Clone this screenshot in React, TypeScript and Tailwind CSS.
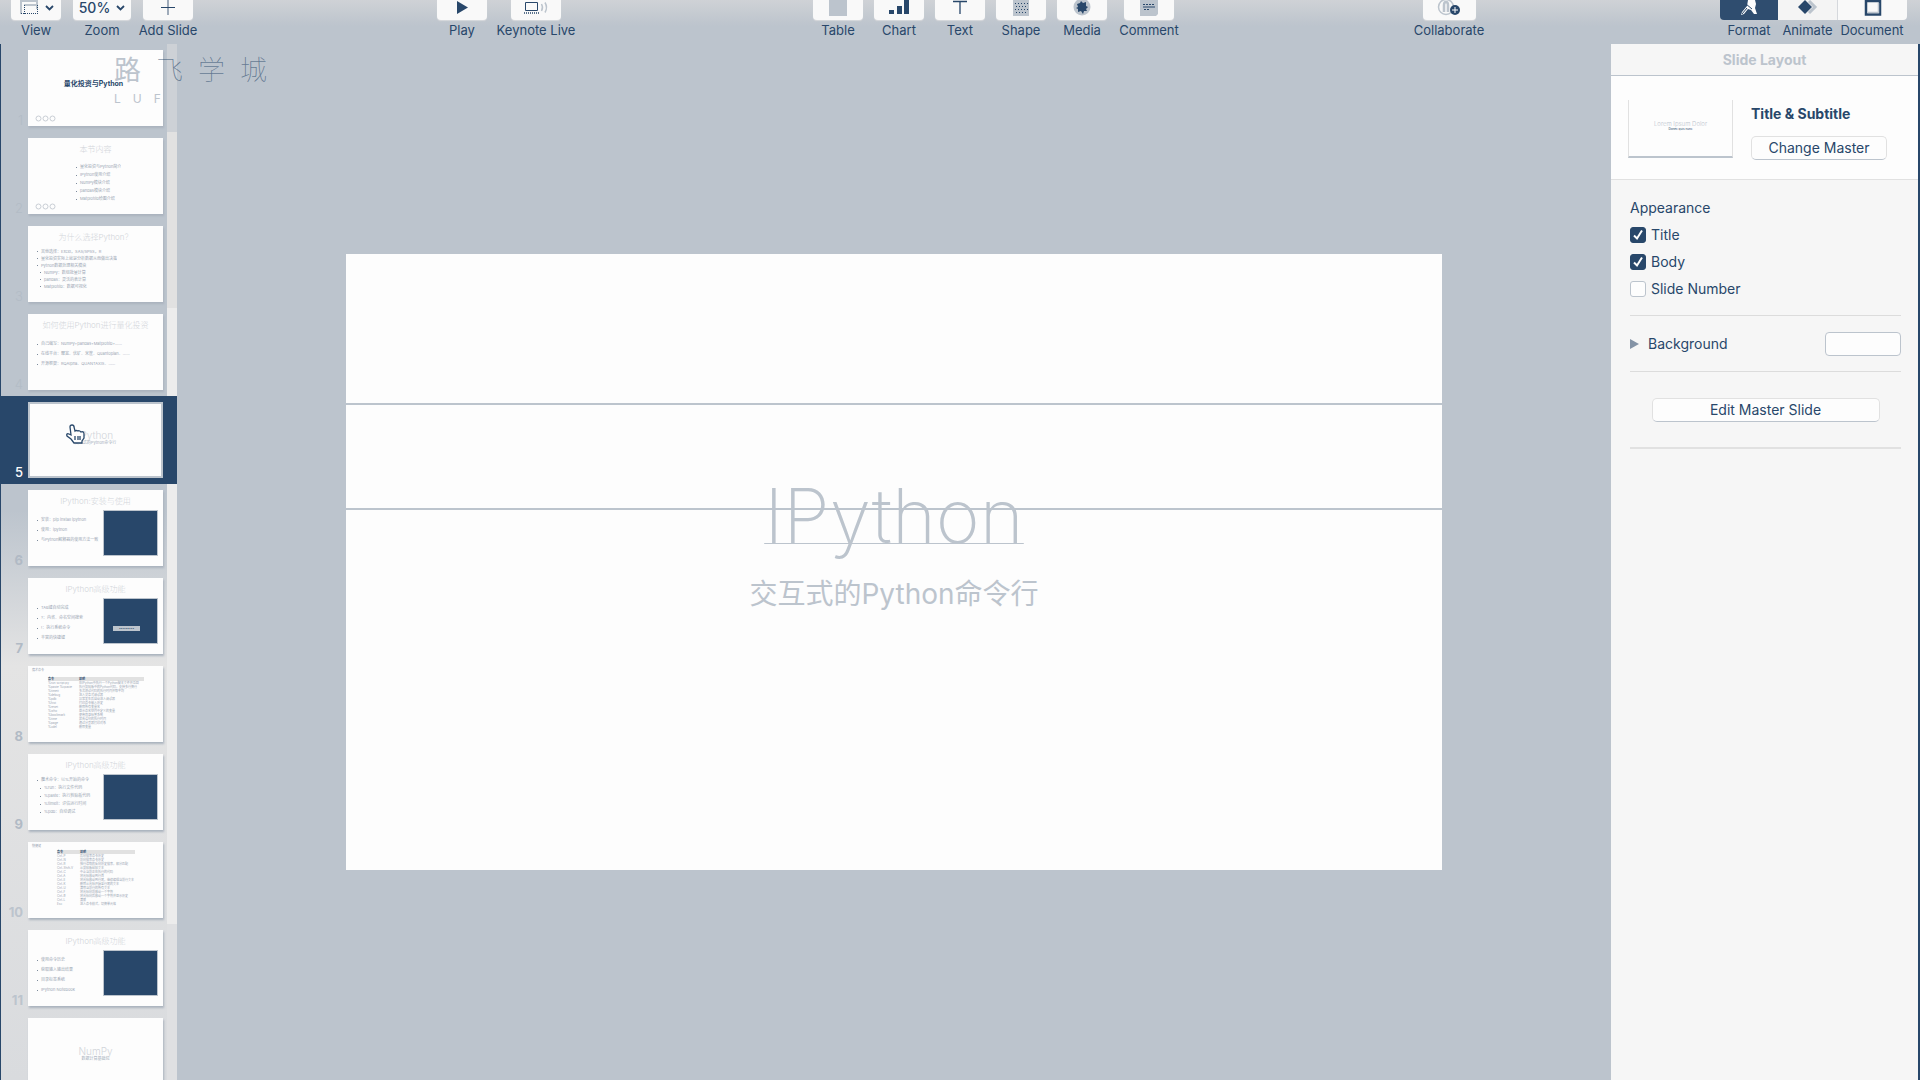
import React from "react";
import type { ReactNode } from "react";

const N = "#28476a";
const G = "#bcc4cd";

const Caret = () => (
  <svg width="9" height="6" viewBox="0 0 9 6" fill="none" stroke={N} strokeWidth="1.8">
    <path d="M1 1l3.5 3.5L8 1" />
  </svg>
);

function ToolButton({ label, width, children }: { label: string; width: string; children: ReactNode }) {
  return (
    <button className="flex w-0 flex-col items-center justify-start">
      <span className={`flex h-5 items-start justify-center gap-1.5 overflow-hidden rounded-b-[4px] bg-[#f9f9f9] shadow-[0_1px_1px_#d8dadd] ${width}`}>
        {children}
      </span>
      <span className="h-5 text-[13px] leading-5 whitespace-nowrap">{label}</span>
    </button>
  );
}

function Toolbar() {
  return (
    <header className="flex h-11 shrink-0 items-start bg-linear-to-b from-[#cfd2d6] via-[#bfc6ce] via-50% to-[#bcc4cd] to-60%">
      <div className="flex flex-1 items-start">
        <div className="flex gap-[66px] pl-9">
          <ToolButton label="View" width="w-[50px]">
            <svg width="20" height="15" viewBox="0 0 20 15" fill="none">
              <path d="M2 0v14M18 0v9M2 1h16M5 5h13" stroke={G} strokeWidth="2" />
              <path d="M5.5 5v9M2 13.500h17M18.500 5v9" stroke={N} strokeDasharray="1 1" />
            </svg>
            <span className="flex h-[15px] items-center"><Caret /></span>
          </ToolButton>
          <ToolButton label="Zoom" width="w-[58px]">
            <span className="text-sm leading-[15px] font-medium">50%</span>
            <span className="flex h-[15px] items-center"><Caret /></span>
          </ToolButton>
          <ToolButton label="Add Slide" width="w-[50px]">
            <svg width="14" height="15" viewBox="0 0 14 15">
              <path d="M7 0v15" stroke="#8191a5" strokeWidth="1.500" />
              <path d="M0 7.500h14" stroke={N} />
            </svg>
          </ToolButton>
        </div>
        <div className="ml-[294px] flex gap-[74px]">
          <ToolButton label="Play" width="w-[50px]">
            <svg width="12" height="15" viewBox="0 0 12 15" fill={N}>
              <path d="M1 1l11 6.500L1 14z" />
            </svg>
          </ToolButton>
          <ToolButton label="Keynote Live" width="w-[50px]">
            <svg width="26" height="15" viewBox="0 0 26 15" fill="none">
              <path d="M2.500 2.500h12v8h-12z" stroke={N} />
              <path d="M1 13h16" stroke={N} strokeWidth="1.500" strokeDasharray="1 1" />
              <path d="M18.500 4q2 3.500 0 7M22 2.500q3 5 0 10" stroke={G} strokeWidth="1.500" />
            </svg>
          </ToolButton>
        </div>
      </div>
      <div className="flex gap-[61px] pr-[300px]">
        <ToolButton label="Table" width="w-[50px]">
          <svg width="18" height="16" viewBox="0 0 18 16"><path d="M0 0h18v16H0z" fill={G} /></svg>
        </ToolButton>
        <ToolButton label="Chart" width="w-[50px]">
          <svg width="20" height="15" viewBox="0 0 20 15" fill={N}><path d="M0 10h5v4H0zM8 6h5v8H8zM15 0h5v14h-5z" /></svg>
        </ToolButton>
        <ToolButton label="Text" width="w-[50px]">
          <svg width="14" height="15" viewBox="0 0 14 15" stroke={N} fill="none"><path d="M0 1.500h14M7 1.500V14" strokeWidth="1.300" /></svg>
        </ToolButton>
        <ToolButton label="Shape" width="w-[50px]">
          <svg width="16" height="16" viewBox="0 0 16 16">
            <path d="M0 0h16v16H0z" fill={G} />
            <path d="M2 3.500h13M3 6.500h12M2 9.500h13M3 12.500h12" stroke={N} strokeDasharray="1 2" />
          </svg>
        </ToolButton>
        <ToolButton label="Media" width="w-[50px]">
          <svg width="18" height="16" viewBox="0 0 18 16">
            <circle cx="9" cy="7" r="8.500" fill={G} />
            <path d="M4 4l3-1 1-2 2 2 3-1v4l2 1-2 2 1 2-3 0-1 3-2-3-3 1v-3l-2-1 2-1z" fill={N} />
          </svg>
        </ToolButton>
        <div className="ml-1.5">
          <ToolButton label="Comment" width="w-[50px]">
            <svg width="18" height="16" viewBox="0 0 18 16">
              <path d="M0 0h18v14l-2 2H0z" fill={G} />
              <path d="M3 4.500h12M4 9.500h6" stroke={N} strokeDasharray="2 1" />
              <path d="M3 7h12" stroke={N} />
            </svg>
          </ToolButton>
        </div>
      </div>
      <div className="pr-[271px]">
        <ToolButton label="Collaborate" width="w-[53px]">
          <svg width="24" height="16" viewBox="0 0 24 16" fill="none">
            <circle cx="9" cy="7" r="7.500" stroke={G} strokeWidth="1.500" />
            <path d="M7 12V5q0-3 2-3t2 3v7" stroke={G} strokeWidth="2.500" />
            <circle cx="18" cy="10" r="5" fill={N} />
            <path d="M18 7v6M15 10h6" stroke="#fdfdfd" />
          </svg>
        </ToolButton>
      </div>
      <div className="flex w-[200px] items-start justify-start">
        <button className="flex w-[58px] flex-col items-center">
          <span className="flex h-5 w-full items-start justify-center rounded-bl-[4px] bg-[#2f4d6f]">
            <svg width="20" height="16" viewBox="0 0 20 16" fill="#fdfdfd">
              <path d="M9 0h7l1 4-1 4 2 6h-3l-3-4-3-1-4 5-3 1 1-3 5-6z" />
              <path d="M7 4l6 5M3 14l5-6" stroke={N} />
            </svg>
          </span>
          <span className="h-5 text-[13px] leading-5">Format</span>
        </button>
        <button className="flex w-[59px] flex-col items-center">
          <span className="flex h-5 w-full items-start justify-center bg-[#f4f4f4]">
            <svg width="20" height="15" viewBox="0 0 20 15"><path d="M11 1l6 6-6 6" fill="none" stroke={G} strokeWidth="3" /><path d="M7 0l7 7-7 7-7-7z" fill={N} /></svg>
          </span>
          <span className="h-5 text-[13px] leading-5">Animate</span>
        </button>
        <button className="flex w-[70px] flex-col items-center">
          <span className="flex h-5 w-full items-start justify-center rounded-br-[4px] border-l border-[#d5d8dc] bg-[#f9f9f9]">
            <svg width="18" height="16" viewBox="0 0 18 16" fill="none"><path d="M2 0v14.500h14V0M2 1h14" stroke={N} strokeWidth="2.500" /><path d="M3.500 12.500h11V3" stroke={G} strokeWidth="1.500" /></svg>
          </span>
          <span className="h-5 text-[13px] leading-5">Document</span>
        </button>
      </div>
    </header>
  );
}

type Slide = {
  title?: string;
  sub?: string;
  kind: "cover" | "list" | "code" | "table" | "center";
  items?: string[];
  rows?: [string, string][];
  dots?: boolean;
};

const magic: [string, string][] = [
  ["命令", "说明"],
  ["%run script.py", "在IPython中执行一个Python脚本文件并返回"],
  ["%paste %cpaste", "执行剪贴板中的Python代码，支持多行换行"],
  ["%timeit", "多次测试代码的执行时间并取平均"],
  ["%debug", "进入交互式调试器"],
  ["%pdb", "异常发生后自动进入调试器"],
  ["%hist", "打印命令输入历史"],
  ["%reset", "删除所有变量名"],
  ["%who", "显示命名空间中定义的变量"],
  ["%bookmark", "使用目录标签系统"],
  ["%time", "报告语句的执行时间"],
  ["%page", "通过分页器打印对象"],
  ["%xdel", "删除变量"],
];
const keys: [string, string][] = [
  ["命令", "说明"],
  ["Ctrl-P", "后向搜索命令历史"],
  ["Ctrl-N", "前向搜索命令历史"],
  ["Ctrl-R", "按行读取的反向历史搜索，部分匹配"],
  ["Ctrl-Shift-V", "从剪贴板粘贴文本"],
  ["Ctrl-C", "中止当前正在执行的代码"],
  ["Ctrl-A", "将光标移动到行首"],
  ["Ctrl-E", "将光标移动到行尾，继续编辑当前行文本"],
  ["Ctrl-K", "删除从光标开始至行尾的文本"],
  ["Ctrl-U", "清除当前行的所有文本"],
  ["Ctrl-F", "将光标向前移动一个字符"],
  ["Ctrl-B", "将光标向后移动一个字符并显示历史"],
  ["Ctrl-L", "清屏"],
  ["Esc", "进入命令模式，切换单元格"],
];

const slides: Slide[] = [
  { kind: "cover", title: "量化投资与Python", dots: true },
  { kind: "list", title: "本节内容", dots: true, items: ["量化投资与Python简介", "IPython使用介绍", "NumPy模块介绍", "pandas模块介绍", "Matplotlib绘图介绍"] },
  { kind: "list", title: "为什么选择Python？", items: ["其他选择：Excel，SAS/SPSS，R", "量化投资实际上就是分析数据从而做出决策", "Python数据处理相关模块", "NumPy：数组批量计算", "pandas：灵活的表计算", "Matplotlib：数据可视化"] },
  { kind: "list", title: "如何使用Python进行量化投资", items: ["自己编写：NumPy+pandas+Matplotlib+……", "在线平台：聚宽、优矿、米筐、Quantopian、……", "开源框架：RQAlpha、QUANTAXIS、……"] },
  { kind: "center", title: "IPython", sub: "交互式的Python命令行" },
  { kind: "code", title: "IPython:安装与使用", items: ["安装：pip install ipython", "使用：ipython", "与Python解释器的使用方法一致"] },
  { kind: "code", title: "IPython高级功能", items: ["TAB键自动完成", "?：内省、命名空间搜索", "!：执行系统命令", "丰富的快捷键"] },
  { kind: "table", title: "魔术命令", rows: magic },
  { kind: "code", title: "IPython高级功能", items: ["魔术命令：以%开始的命令", "%run：执行文件代码", "%paste：执行剪贴板代码", "%timeit：评估运行时间", "%pdb：自动调试"] },
  { kind: "table", title: "快捷键", rows: keys },
  { kind: "code", title: "IPython高级功能", items: ["使用命令历史", "获取输入输出结果", "目录标签系统", "IPython Notebook"] },
  { kind: "center", title: "NumPy", sub: "数据计算基础包" },
];

function Rings() {
  return (
    <svg className="absolute bottom-1 left-[7px]" width="21" height="7" viewBox="0 0 21 7" fill="none" stroke="#c9ced5">
      <circle cx="3.500" cy="3.500" r="2.500" /><circle cx="10.500" cy="3.500" r="2.500" /><circle cx="17.500" cy="3.500" r="2.500" />
    </svg>
  );
}

function SlideBody({ slide, index }: { slide: Slide; index: number }) {
  const { kind, title, sub, items = [], rows = [] } = slide;
  if (kind === "cover")
    return <div className="pt-7 pr-1 text-center text-[7px] leading-3 font-bold whitespace-nowrap text-[#28476a]">{title}</div>;
  if (kind === "center")
    return (
      <div className="pt-7 text-center">
        <div className="text-[10px] leading-[10px] font-light text-[#d2d5da]">{title}</div>
        <div className="text-[4px] leading-[6px] text-[#a3adba]">{sub}</div>
      </div>
    );
  if (kind === "table") {
    const wide = index === 7;
    return (
      <div className="pt-[2px]">
        <div className="pl-1 text-[3px] leading-[4px]">{title}</div>
        <table className={wide ? "mt-[5px] ml-5 w-[96px]" : "mt-[2px] ml-[29px] w-[78px]"}>
          <tbody>
            {rows.map(([a, b], i) => (
              <tr key={i} className={`${wide ? "text-[3px] leading-[4px]" : "text-[3px] leading-[4px]"} ${i === 0 ? "bg-[#e1e1e1] font-bold text-[#28476a]" : ""}`}>
                <td className={wide ? "w-[31px]" : "w-[23px]"}>{a}</td>
                <td className="whitespace-nowrap">{b}</td>
              </tr>
            ))}
          </tbody>
        </table>
      </div>
    );
  }
  const dense = items.length > 4;
  return (
    <div>
      <div className="pt-[5px] text-center text-[8px] leading-3 font-light whitespace-nowrap text-[#d2d5da]">{title}</div>
      <div className="flex justify-between">
        <ul className={`flex flex-col ${index === 1 ? "mt-2 ml-12" : dense ? "mt-[5px] ml-[9px]" : "mt-2 ml-[9px]"} ${kind === "code" ? "w-[64px]" : ""}`}>
          {items.map((t, i) => (
            <li
              key={i}
              className={`flex items-center gap-[3px] overflow-hidden whitespace-nowrap text-[4px] ${
                !dense ? "h-[10px]" : index === 2 ? "h-[7px]" : "h-2"
              } ${(index === 2 && i > 2) || (index === 8 && i > 0) ? "pl-[3px]" : ""}`}
            >
              <span className="size-px shrink-0 bg-[#7d8b9c]" />
              {t}
            </li>
          ))}
        </ul>
        {kind === "code" && (
          <div className="mt-[3px] mr-[5px] flex h-[46px] w-[55px] items-end justify-center border border-[#bcc4cd] bg-[#28476a] pr-2 pb-3">
            {index === 6 && <span className="h-[5px] w-[27px] bg-[#bcc4cd] text-center text-[3px] leading-[5px] whitespace-nowrap text-[#28476a]">•••••••••</span>}
          </div>
        )}
      </div>
    </div>
  );
}

function Navigator() {
  return (
    <nav aria-label="Slides" className="relative flex w-[177px] shrink-0 flex-col overflow-hidden border-l border-[#28476a] bg-linear-to-b from-[#bcc4cd] from-45% via-[#e4e4e4] via-60% to-[#d9dbde]">
      {slides.map((s, i) => {
        const active = i === 4;
        return (
          <button
            key={i}
            aria-label={`Slide ${i + 1}`}
            className={`flex h-[88px] w-full shrink-0 items-stretch py-1.5 text-left ${active ? "bg-[#28476a]" : ""}`}
          >
            <span className={`flex w-[27px] items-end justify-end pr-[5px] text-[13px] leading-3 ${active ? "font-medium text-[#fdfdfd]" : i > 8 ? "font-bold text-[#bcc4cd]" : i > 4 ? "font-bold text-[#b1bac5]" : "font-light text-[#b3bcc6]"}`}>
              {i < 11 && i + 1}
            </span>
            <span className={`relative block h-[76px] w-[135px] overflow-hidden bg-[#fdfdfd] text-[#9aa5b3] ${active ? "outline-2 -outline-offset-2 outline-[#bcc4cd]" : "shadow-[1px_2px_2px_#aab3be]"}`}>
              <SlideBody slide={s} index={i} />
              {s.dots && <Rings />}
            </span>
            <span className={`-my-1.5 ml-1 flex-1 ${active ? "" : i < 1 ? "bg-[#cdd1d6]" : i < 3 ? "bg-[#e1e1e1]" : i > 9 ? "bg-[#dfe0e2]" : "bg-[#ececec]"}`} />
          </button>
        );
      })}
      <svg className="absolute top-[380px] left-[65px]" width="20" height="22" viewBox="0 0 20 22" fill="#fdfdfd" stroke={N} strokeWidth="1.300">
        <path d="M5 11L4 3q0-2 2-2t2 2l1 4q1-1 3 0 1-1 3 1 3-1 3 2v4l-2 3v2H8l-3-4-4-3q-1-3 2-2z" />
        <path d="M9 12v4M12 12v4M14 12v4" />
      </svg>
    </nav>
  );
}

function Check({ label, on }: { label: string; on?: boolean }) {
  return (
    <label className="flex h-[27px] items-center gap-[5px]">
      <span className="relative flex size-4">
        <input type="checkbox" defaultChecked={on} className="peer size-4 appearance-none rounded-[3px] border border-[#bcc4cd] bg-[#fdfdfd] checked:border-[#28476a] checked:bg-[#28476a]" />
        <svg className="pointer-events-none absolute inset-0 hidden peer-checked:block" width="16" height="16" viewBox="0 0 16 16" fill="none" stroke="#fdfdfd" strokeWidth="2">
          <path d="M4 8.500l3 3 5-8" />
        </svg>
      </span>
      {label}
    </label>
  );
}

function Inspector() {
  return (
    <aside className="flex w-[309px] shrink-0 flex-col border-r-2 border-[#28476a] bg-[#f6f6f6] text-sm">
      <h2 className="flex h-8 items-center justify-center border-b border-[#bcc4cd] font-bold text-[#bcc4cd]">Slide Layout</h2>
      <section className="flex h-[104px] items-start border-b border-[#e1e1e1] bg-[#fdfdfd] pt-6 pl-[17px]">
        <div className="flex h-[58px] w-[105px] flex-col items-center border border-t-0 border-b-2 border-[#e1e1e1] border-b-[#bcc4cd] pt-5">
          <span className="text-[6px] leading-[7px] font-light text-[#bcc4cd]">Lorem Ipsum Dolor</span>
          <span className="text-[3px] leading-[5px]">Donec quis nunc</span>
        </div>
        <div className="ml-[18px] pt-1">
          <h3 className="leading-5 font-bold">Title &amp; Subtitle</h3>
          <button className="mt-3 h-6 w-[136px] rounded-[5px] border border-[#e1e1e1] border-b-[#bcc4cd] bg-[#fdfdfd]">Change Master</button>
        </div>
      </section>
      <section className="mr-[17px] ml-[19px] border-b border-[#dcdcdc] pt-4 pb-[13px]">
        <h3 className="h-[25px] leading-6">Appearance</h3>
        <Check label="Title" on />
        <Check label="Body" on />
        <Check label="Slide Number" />
      </section>
      <section className="mr-[17px] ml-[19px] flex h-14 items-center border-b border-[#dcdcdc]">
        <button className="flex items-center gap-[9px]">
          <svg width="9" height="10" viewBox="0 0 9 10"><path d="M0 0l9 5-9 5z" fill="#8493a6" /></svg>
          Background
        </button>
        <button aria-label="Background color" className="ml-auto h-6 w-[76px] rounded-[4px] border border-[#bcc4cd] bg-[#fdfdfd]" />
      </section>
      <section className="mr-[17px] ml-[19px] flex h-[77px] justify-center border-b-2 border-[#e1e1e1] pt-[26px]">
        <button className="h-6 w-[228px] rounded-[5px] border border-[#e1e1e1] border-b-[#bcc4cd] bg-[#fdfdfd]">Edit Master Slide</button>
      </section>
    </aside>
  );
}

export default function App() {
  return (
    <div className="relative flex h-screen flex-col overflow-hidden bg-[#bcc4cd] font-['Inter','Noto_Sans_CJK_SC',sans-serif] text-[#28476a]">
      <Toolbar />
      <div className="flex min-h-0 flex-1">
        <Navigator />
        <main className="flex min-w-0 flex-1 items-start justify-center px-[169px] pt-[210px]">
          <article className="flex aspect-[1096/616] w-full flex-col bg-[#fdfdfd] text-center text-[#bcc4cd]">
            <div className="h-[151px] border-b-2 border-[#bcc4cd]" />
            <div className="h-[105px] border-b-2 border-[#bcc4cd]" />
            <h1 className="-mt-8 text-[75px] leading-[76px] font-extralight underline decoration-1 underline-offset-0 [text-decoration-skip-ink:none]">IPython</h1>
            <p className="mt-5 text-[28px] leading-10">交互式的Python命令行</p>
          </article>
        </main>
        <Inspector />
      </div>
      <div className="pointer-events-none absolute top-[51px] left-[114px] text-[#bcc4cd]">
        <div className="flex gap-[15px] text-[27px] leading-10">
          <span>路</span>
          <span className="flex gap-[15px] font-thin text-[#28476a]/60"><span>飞</span><span>学</span><span>城</span></span>
        </div>
        <div className="flex gap-3 text-xs leading-4"><span>L</span><span>U</span><span>F</span></div>
      </div>
    </div>
  );
}
